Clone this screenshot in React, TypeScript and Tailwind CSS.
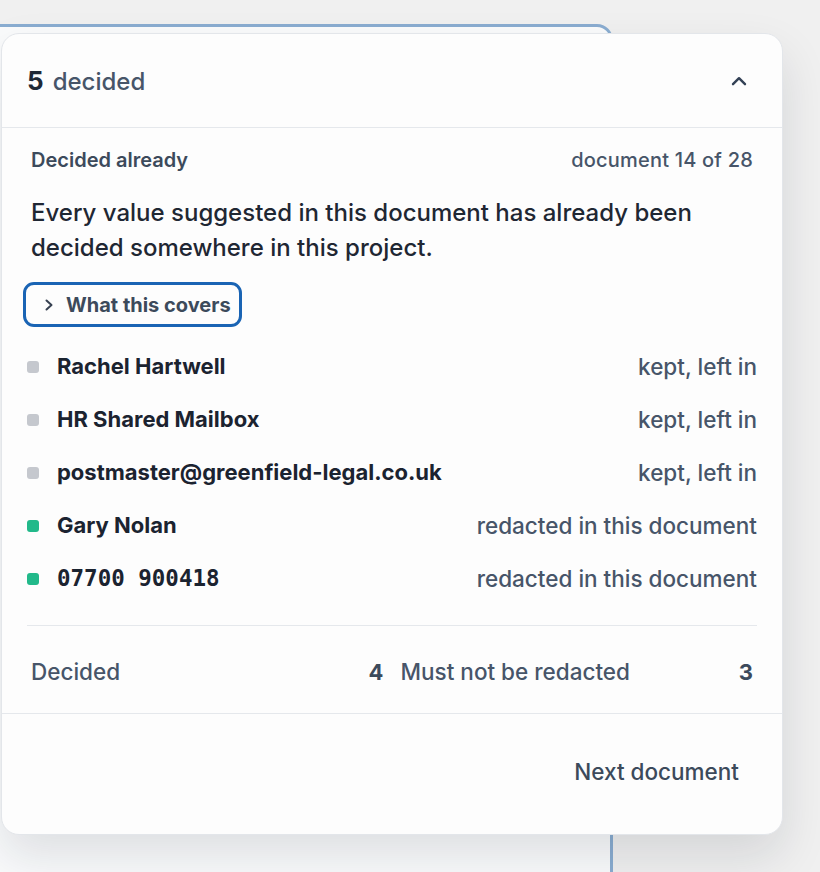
import React from "react";

type Row = { name: string; status: string; tone: "grey" | "green"; mono?: boolean };

const rows: Row[] = [
  { name: "Rachel Hartwell", status: "kept, left in", tone: "grey" },
  { name: "HR Shared Mailbox", status: "kept, left in", tone: "grey" },
  { name: "postmaster@greenfield-legal.co.uk", status: "kept, left in", tone: "grey" },
  { name: "Gary Nolan", status: "redacted in this document", tone: "green" },
  { name: "07700 900418", status: "redacted in this document", tone: "green", mono: true },
];

function ChevronUp() {
  return (
    <svg width="16" height="10" viewBox="0 0 16 10" fill="none" className="block">
      <path d="M2 8.2 L8 2.2 L14 8.2" stroke="#334155" strokeWidth="2.4" strokeLinecap="round" strokeLinejoin="round" />
    </svg>
  );
}

function ChevronRight() {
  return (
    <svg width="10" height="14" viewBox="0 0 10 14" fill="none" className="block">
      <path d="M2.5 2.5 L7.5 7 L2.5 11.5" stroke="#374151" strokeWidth="2" strokeLinecap="round" strokeLinejoin="round" />
    </svg>
  );
}

export default function App() {
  return (
    <div className="relative w-[820px] h-[872px] overflow-hidden bg-[#f0f0f0] font-[Inter,'Noto_Sans',sans-serif]">
      {/* card behind the popover */}
      <div className="absolute left-[-20px] top-[24px] w-[633px] h-[900px] rounded-tr-[16px] border-[3px] border-[#8aadd1] bg-[#fafbfc]" />

      {/* popover */}
      <div className="absolute left-[1px] top-[33px] w-[782px] h-[802px] flex flex-col rounded-[18px] border border-[#e3e6ea] bg-[#fdfdfd] shadow-[0_22px_48px_rgba(15,23,42,0.12)]">
        {/* header */}
        <div className="h-[94px] shrink-0 flex items-center justify-between pl-[25px] pr-[35px] border-b border-[#e5e8ec]">
          <div className="flex items-baseline">
            <span className="text-[26px] font-bold text-[#1f2937]">5</span>
            <span className="ml-[9px] text-[24px] font-medium text-[#475569]">decided</span>
          </div>
          <ChevronUp />
        </div>

        {/* body */}
        <div className="px-[25px] pt-[18px]">
          <div className="px-[4px] h-[28px] flex items-center justify-between">
            <span className="text-[20px] font-semibold text-[#3c4a5b]">Decided already</span>
            <span className="text-[20px] font-medium text-[#475569] tracking-[0.2px]">document 14 of 28</span>
          </div>

          <p className="mt-[21px] px-[4px] text-[24px] font-medium leading-[35px] text-[#1f2733]">
            Every value suggested in this document has already been decided somewhere in this project.
          </p>

          <button className="mt-[17px] ml-[-4px] h-[45px] w-[219px] flex items-center pl-[18px] rounded-[11px] border-[3px] border-[#1a64b4] bg-transparent">
            <ChevronRight />
            <span className="ml-[12px] text-[20px] font-bold text-[#3c4a5b]">What this covers</span>
          </button>

          <ul className="mt-[13px]">
            {rows.map((r) => (
              <li key={r.name} className="h-[53px] flex items-center justify-between">
                <div className="flex items-center">
                  <span
                    className={
                      r.tone === "green"
                        ? "block shrink-0 w-[12px] h-[12px] rounded-[3px] bg-[#22b98a]"
                        : "block shrink-0 w-[12px] h-[12px] rounded-[3px] bg-[#c5c8ce]"
                    }
                  />
                  <span
                    className={
                      r.mono
                        ? "ml-[18px] text-[22.5px] font-bold text-[#1b2330] font-['DejaVu_Sans_Mono',monospace]"
                        : "ml-[18px] text-[22px] font-bold text-[#1b2330]"
                    }
                  >
                    {r.name}
                  </span>
                </div>
                <span className="text-[22.5px] font-medium text-[#475569]">{r.status}</span>
              </li>
            ))}
          </ul>

          <div className="mt-[20px] h-px bg-[#e5e8ec]" />

          <div className="px-[4px] pt-[31px] pb-[26px] grid grid-cols-2 gap-x-[17px]">
            <div className="h-[30px] flex items-center justify-between">
              <span className="text-[22.5px] font-medium text-[#475569]">Decided</span>
              <span className="text-[22px] font-bold text-[#3c4a5b]">4</span>
            </div>
            <div className="h-[30px] flex items-center justify-between">
              <span className="text-[22.5px] font-medium text-[#475569]">Must not be redacted</span>
              <span className="text-[22px] font-bold text-[#3c4a5b]">3</span>
            </div>
          </div>
        </div>

        <div className="h-px bg-[#e5e8ec]" />

        <div className="flex justify-end pt-[34px] pr-[27px]">
          <button className="h-[48px] px-[16px] flex items-center text-[22.5px] font-medium text-[#3c4a5b] bg-transparent">
            Next document
          </button>
        </div>
      </div>
    </div>
  );
}
